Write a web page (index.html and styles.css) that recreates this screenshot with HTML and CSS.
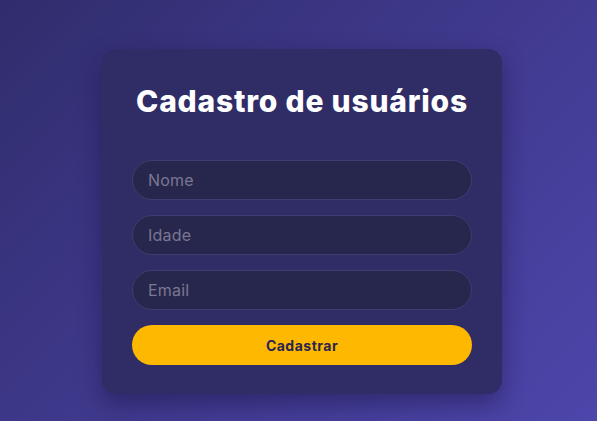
FILE: index.html
```html
<!DOCTYPE html>
<html lang="pt-BR">
<head>
<meta charset="utf-8">
<title>Cadastro de usuários</title>
<link rel="stylesheet" href="styles.css">
</head>
<body>
  <main class="page">
    <form class="card">
      <h1 class="title">Cadastro de usuários</h1>
      <div class="fields">
        <input class="field" type="text" placeholder="Nome">
        <input class="field" type="text" placeholder="Idade">
        <input class="field" type="email" placeholder="Email">
        <button class="submit" type="button">Cadastrar</button>
      </div>
    </form>
  </main>
</body>
</html>
```

FILE: styles.css
```css
* { box-sizing: border-box; }

html, body {
  margin: 0;
  height: 100%;
}

body {
  background: linear-gradient(135deg, #302d6c 0%, #3e388a 45%, #4d46ab 100%);
  font-family: Inter, "Open Sans", sans-serif;
  overflow: hidden;
}

.page {
  display: flex;
  justify-content: center;
  align-items: flex-start;
  padding: 49px 0 0 7px;
}

.card {
  width: 400px;
  height: 345px;
  background: #2f2c66;
  border-radius: 14px;
  padding: 30px 30px 29px;
  box-shadow: 0 10px 25px rgba(20, 16, 60, 0.45);
  display: flex;
  flex-direction: column;
}

.title {
  margin: 0;
  color: #ffffff;
  font-size: 30px;
  font-weight: 800;
  letter-spacing: 0.8px;
  text-align: center;
  line-height: 44px;
  height: 44px;
}

.fields {
  margin-top: 37px;
  display: flex;
  flex-direction: column;
  gap: 15px;
}

.field {
  height: 40px;
  width: 100%;
  border-radius: 20px;
  border: 1px solid #3f3c70;
  background: #27264d;
  padding: 0 15px;
  font-family: Inter, "Open Sans", sans-serif;
  font-size: 16px;
  font-weight: 400;
  letter-spacing: 0.2px;
  color: #ddd;
  outline: none;
}

.field::placeholder {
  color: #7a7892;
}

.submit {
  height: 40px;
  width: 100%;
  border: none;
  border-radius: 20px;
  background: #ffb800;
  color: #2a2550;
  font-family: Inter, "Open Sans", sans-serif;
  font-weight: 700;
  font-size: 14px;
  letter-spacing: 0.5px;
  cursor: pointer;
}
```
